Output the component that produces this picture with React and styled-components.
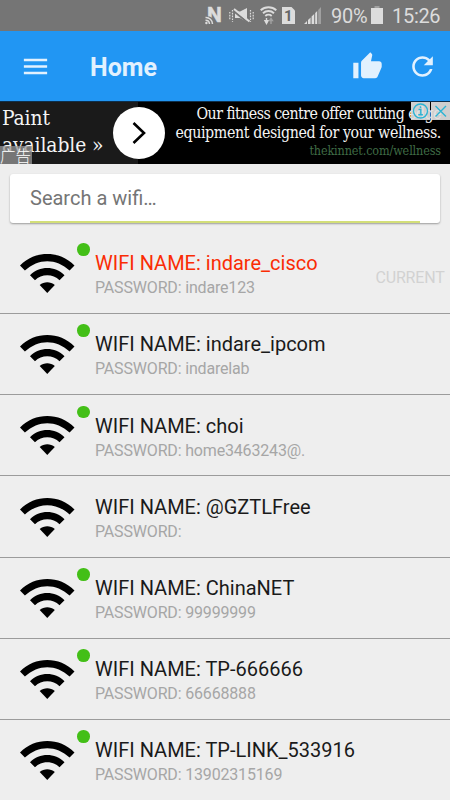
import React from "react";
import styled, { createGlobalStyle } from "styled-components";

const GlobalStyle = createGlobalStyle`
  * {
    box-sizing: border-box;
  }

  body {
    margin: 0;
    background-color: #eeeeee;
    font-family: Roboto, "Noto Sans CJK SC", sans-serif;
  }
`;

const Screen = styled.div`
  width: 450px;
  height: 800px;
  overflow: hidden;
  display: flex;
  flex-direction: column;
  background-color: #eeeeee;
`;

const StatusBar = styled.div`
  height: 31px;
  flex-shrink: 0;
  display: flex;
  align-items: flex-start;
  justify-content: flex-end;
  padding-right: 10px;
  background-color: #757575;
  color: #dcdcdc;
`;

const StatusIcon = styled.svg`
  display: block;
  width: ${(props) => props.$width}px;
  height: 19px;
  flex-shrink: 0;
  margin-top: 6px;
  margin-right: ${(props) => props.$gap}px;
  fill: none;
  stroke: #dcdcdc;
`;

const StatusText = styled.span`
  width: ${(props) => props.$width}px;
  font-size: 20px;
  line-height: 33px;
  letter-spacing: ${(props) => props.$spacing || 0}px;
  white-space: nowrap;
`;

const Toolbar = styled.header`
  height: 70px;
  flex-shrink: 0;
  display: flex;
  align-items: center;
  padding: 1px 12px 0 20px;
  background-color: #2196f3;
  color: #e2f1fe;
`;

const ToolbarTitle = styled.h1`
  flex: 1;
  margin: 3px 0 0 39px;
  font-size: 25px;
  font-weight: 700;
  line-height: 28px;
`;

const ToolbarButton = styled.button`
  width: 31px;
  height: 31px;
  margin-left: ${(props) => props.$left || 0}px;
  padding: 0;
  border: none;
  background: transparent;
  color: inherit;
  cursor: pointer;

  svg {
    display: block;
    width: 31px;
    height: 31px;
    fill: currentColor;
  }
`;

const AdBanner = styled.div`
  position: relative;
  height: 63px;
  flex-shrink: 0;
  display: flex;
  overflow: hidden;
  border-top: 1px solid #0d2f4c;
  background: linear-gradient(90deg, #1a1a1a 0 138px, #000 138px);
  color: #f4f4f4;
  font-family: "DejaVu Serif Condensed", "DejaVu Serif", serif;
  font-stretch: condensed;
`;

const AdHeadline = styled.div`
  width: 113px;
  padding: 3px 0 0 2px;
  font-size: 20.8px;
  line-height: 27px;
  letter-spacing: -0.1px;
  white-space: nowrap;
`;

const AdArrow = styled.div`
  width: 52px;
  height: 52px;
  flex-shrink: 0;
  margin-top: 5px;
  border-radius: 50%;
  background-color: #fff;

  svg {
    display: block;
    fill: none;
    stroke: #000;
    stroke-width: 2.6;
  }
`;

const AdText = styled.div`
  flex: 1;
  padding: 2px 9px 0 0;
  text-align: right;
  white-space: nowrap;
`;

const AdLine = styled.div`
  font-size: 15.8px;
  line-height: 19px;
  letter-spacing: ${(props) => props.$spacing}px;
`;

const AdLink = styled.div`
  color: #3f6b45;
  font-size: 12.5px;
  line-height: 17px;
  letter-spacing: -0.13px;
`;

const AdLabel = styled.span`
  position: absolute;
  left: 0;
  bottom: 0;
  width: 32px;
  height: 18px;
  background-color: rgba(150, 150, 150, 0.75);
  color: #fff;
  font-family: "Noto Sans CJK SC", sans-serif;
  font-size: 15.5px;
  font-weight: 300;
  line-height: 18px;
`;

const AdControls = styled.div`
  position: absolute;
  top: 0;
  right: 0;
  display: flex;
  gap: 1px;

  svg {
    display: block;
    height: 18px;
    background-color: rgba(225, 225, 225, 0.92);
    fill: none;
    stroke: #2cb4d4;
    stroke-width: 1.4;
  }
`;

const SearchCard = styled.div`
  height: 49px;
  flex-shrink: 0;
  margin: 10px 10px 0;
  padding: 0 20px;
  border-radius: 3px;
  background-color: #fff;
  box-shadow: 0 1px 2px rgba(0, 0, 0, 0.35);
`;

const SearchInput = styled.input`
  display: block;
  width: 100%;
  height: 49px;
  padding: 1px 0 0;
  border: none;
  border-bottom: 2px solid #d3df78;
  outline: none;
  background: transparent;
  font-family: inherit;
  font-size: 20px;

  &::placeholder {
    color: #757575;
    opacity: 1;
  }
`;

const WifiList = styled.ul`
  margin: 9.8px 0 0;
  padding: 0;
  list-style: none;
`;

const WifiItem = styled.li`
  height: 81.2px;
  display: flex;
  border-bottom: 1px solid #9b9b9b;
`;

const SignalBox = styled.div`
  position: relative;
  width: 95px;
  flex-shrink: 0;
  padding: 21.2px 0 0 20px;

  svg {
    display: block;
    width: 54.5px;
    height: 39px;
  }
`;

const StatusDot = styled.span`
  position: absolute;
  top: 10.5px;
  left: 77px;
  width: 12.6px;
  height: 12.6px;
  border-radius: 50%;
  background-color: #43bf17;
`;

const WifiInfo = styled.div`
  flex: 1;
  padding-top: 18.4px;
  white-space: nowrap;
`;

const WifiName = styled.div`
  color: ${(props) => (props.$current ? "#fa2c04" : "#1a1a1a")};
  font-size: 20px;
  line-height: 25px;
`;

const WifiPassword = styled.div`
  color: #a6a6a6;
  font-size: 16px;
  line-height: 23px;
  letter-spacing: -0.17px;
`;

const CurrentLabel = styled.span`
  padding: 34px 5.5px 0 0;
  color: #d2d2d2;
  font-size: 16px;
  line-height: 22px;
  letter-spacing: -0.2px;
`;

const networks = [
  { name: "indare_cisco", password: "indare123", online: true, current: true },
  { name: "indare_ipcom", password: "indarelab", online: true },
  { name: "choi", password: "home3463243@.", online: true },
  { name: "@GZTLFree", password: "", online: false },
  { name: "ChinaNET", password: "99999999", online: true },
  { name: "TP-666666", password: "66668888", online: true },
  { name: "TP-LINK_533916", password: "13902315169", online: true },
];

const StatusIcons = () => (
  <>
    <StatusIcon $width={17} $gap={7} viewBox="0 0 17 19">
      <text x="2" y="16" fontFamily="Roboto" fontSize="21" fontWeight="700" fill="#dcdcdc" strokeWidth=".5">N</text>
      <path d="M0 10.500h4.500a7.500 7.500 0 0 1 5 8H0z" fill="#757575" stroke="none" />
      <path d="M.5 11.500a6.500 6.500 0 0 1 7 6.500M.5 14.300a4 4 0 0 1 4 3.700" strokeWidth="1.500" />
      <circle cx="1.400" cy="17" r="1.200" fill="#dcdcdc" stroke="none" />
    </StatusIcon>
    <StatusIcon $width={25} $gap={6} viewBox="0 0 25 19">
      <path d="M6 5.500h5l7-3.500v14l-7-4H6z" fill="#dcdcdc" stroke="none" />
      <path d="M4 4.500L20 17.500" stroke="#757575" strokeWidth="2.200" />
      <path d="M5 3L20.500 15.500" strokeWidth="2" />
      <path d="M3.500 4v12M21.500 4v12M.8 6v8M24.200 6v8" strokeWidth="1.200" strokeDasharray="1.600 1.200" />
    </StatusIcon>
    <StatusIcon $width={17} $gap={5} viewBox="0 0 17 19">
      <path d="M.7 4.300a11.500 11.500 0 0 1 15.600 0M3 7.200a8 8 0 0 1 11 0M5.300 10a4.800 4.800 0 0 1 6.400 0" strokeWidth="1.900" />
      <path d="M6.500 12v3.500M5 14.800h3l-1.500 2.700z" fill="#dcdcdc" strokeWidth="1.400" />
      <path d="M11 18v-4M9.600 14.500h2.800L11 12.500z" stroke="#a2a2a2" fill="#a2a2a2" strokeWidth="1.400" />
    </StatusIcon>
    <StatusIcon $width={13} $gap={9} viewBox="0 0 13 19">
      <path d="M0 1h9.500L13 4.500V18H0z" fill="#dcdcdc" stroke="none" />
      <text x="6.300" y="15" textAnchor="middle" fontFamily="Roboto" fontSize="15" fontWeight="700" fill="#666" stroke="none">1</text>
    </StatusIcon>
    <StatusIcon $width={17} $gap={10} viewBox="0 0 17 19">
      <path d="M0 18l3-3v3zM4 14l2.600-2.600V18H4zM7.600 10.400L10.200 8v10H7.600zM11.200 7l2-2v13h-2z" fill="#dcdcdc" stroke="none" />
      <path d="M14.200 4L17 1v17h-2.800z" fill="#a0a0a0" stroke="none" />
    </StatusIcon>
  </>
);

const WifiIcon = () => (
  <svg viewBox="0 0 54.5 39">
    <path d="M0 11.400C15-3.800 39.500-3.800 54.500 11.400L49.600 16.500C36 4 18.500 4 4.900 16.500z" />
    <path d="M10 21.300C19.500 11.600 35 11.600 44.500 21.300L39.500 26.200C33 19.600 21.500 19.600 15 26.200z" />
    <path d="M19.700 31C24 27.300 30.500 27.300 34.800 31L27.250 39z" />
  </svg>
);

const App = () => {
  return (
    <Screen>
      <GlobalStyle />
      <StatusBar>
        <StatusIcons />
        <StatusText $width={40} $spacing={-0.3}>90%</StatusText>
        <StatusIcon $width={12} $gap={9} viewBox="0 0 12 19">
          <path d="M3.500 0h5v2h-5z" fill="#a0a0a0" stroke="none" />
          <path d="M0 2h12v16H0z" fill="#dcdcdc" stroke="none" />
        </StatusIcon>
        <StatusText $width={48} $spacing={-0.3}>15:26</StatusText>
      </StatusBar>

      <Toolbar>
        <ToolbarButton aria-label="Menu">
          <svg viewBox="0 0 24 24">
            <path d="M3 18h18v-2H3v2zm0-5h18v-2H3v2zm0-7v2h18V6H3z" />
          </svg>
        </ToolbarButton>
        <ToolbarTitle>Home</ToolbarTitle>
        <ToolbarButton aria-label="Like">
          <svg viewBox="0 0 24 24">
            <path d="M1 21h4V9H1v12zm22-11c0-1.100-.9-2-2-2h-6.310l.95-4.570.03-.32c0-.41-.17-.79-.44-1.060L14.170 1 7.590 7.590C7.220 7.950 7 8.450 7 9v10c0 1.100.9 2 2 2h9c.83 0 1.540-.5 1.840-1.220l3.020-7.050c.09-.23.14-.47.14-.73v-2z" />
          </svg>
        </ToolbarButton>
        <ToolbarButton $left={24} aria-label="Refresh">
          <svg viewBox="0 0 24 24">
            <path d="M17.650 6.350C16.200 4.900 14.210 4 12 4c-4.420 0-7.990 3.580-7.990 8s3.570 8 7.990 8c3.730 0 6.840-2.550 7.730-6h-2.080c-.82 2.330-3.040 4-5.650 4-3.310 0-6-2.690-6-6s2.690-6 6-6c1.660 0 3.140.69 4.220 1.780L13 11h7V4l-2.350 2.350z" />
          </svg>
        </ToolbarButton>
      </Toolbar>

      <AdBanner>
        <AdHeadline>
          Paint
          <br />
          available »
        </AdHeadline>
        <AdArrow>
          <svg width="52" height="52" viewBox="0 0 52 52">
            <path d="M20.500 16L31 26 20.500 36" />
          </svg>
        </AdArrow>
        <AdText>
          <AdLine $spacing={-0.55}>Our fitness centre offer cutting edge</AdLine>
          <AdLine $spacing={-0.38}>equipment designed for your wellness.</AdLine>
          <AdLink>thekinnet.com/wellness</AdLink>
        </AdText>
        <AdLabel>广告</AdLabel>
        <AdControls>
          <svg width="19" viewBox="0 0 19 18">
            <circle cx="9.500" cy="9" r="7" />
            <path d="M7.500 7.500h2.300v5M7.300 12.800h4.600M9.500 4.300v1.700" />
          </svg>
          <svg width="19" viewBox="0 0 19 18">
            <path d="M4.500 4l10.500 10.500M15 4L4.500 14.500" />
          </svg>
        </AdControls>
      </AdBanner>

      <SearchCard>
        <SearchInput placeholder="Search a wifi…" />
      </SearchCard>

      <WifiList>
        {networks.map((network) => (
          <WifiItem key={network.name}>
            <SignalBox>
              <WifiIcon />
              {network.online && <StatusDot />}
            </SignalBox>
            <WifiInfo>
              <WifiName $current={network.current}>WIFI NAME: {network.name}</WifiName>
              <WifiPassword>PASSWORD: {network.password}</WifiPassword>
            </WifiInfo>
            {network.current && <CurrentLabel>CURRENT</CurrentLabel>}
          </WifiItem>
        ))}
      </WifiList>
    </Screen>
  );
};

export default App;
